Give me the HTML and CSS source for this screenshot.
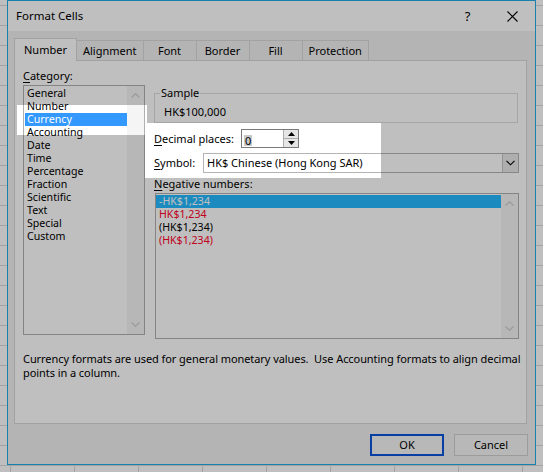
FILE: index.html
```html
<!DOCTYPE html>
<html>
<head>
<meta charset="utf-8">
<title>Format Cells</title>
<link rel="stylesheet" href="styles.css">
</head>
<body>
<div class="sheet">
  <div class="dialog">
    <div class="titlebar">
      <span class="title">Format Cells</span>
      <span class="tb-btn help">?</span>
      <span class="tb-btn close"><svg width="11" height="11" viewBox="0 0 11 11"><path d="M0.5 0.5 L10.5 10.5 M10.5 0.5 L0.5 10.5" stroke="#000" stroke-width="1.1" fill="none"/></svg></span>
    </div>
    <div class="body">
      <div class="tabs">
        <div class="tab active">Number</div>
        <div class="tab">Alignment</div>
        <div class="tab">Font</div>
        <div class="tab">Border</div>
        <div class="tab">Fill</div>
        <div class="tab">Protection</div>
      </div>
      <div class="panel">
        <div class="cols">
          <div class="left">
            <div class="label"><u>C</u>ategory:</div>
            <div class="listbox cat">
              <div class="items">
                <div class="item">General</div>
                <div class="item">Number</div>
                <div class="item sel">Currency</div>
                <div class="item">Accounting</div>
                <div class="item">Date</div>
                <div class="item">Time</div>
                <div class="item">Percentage</div>
                <div class="item">Fraction</div>
                <div class="item">Scientific</div>
                <div class="item">Text</div>
                <div class="item">Special</div>
                <div class="item">Custom</div>
              </div>
              <div class="scroll">
                <svg width="9" height="5" viewBox="0 0 9 5"><path d="M0.5 4.5 L4.5 0.8 L8.5 4.5" stroke="#d2d2d2" stroke-width="1.5" fill="none"/></svg>
                <svg width="9" height="5" viewBox="0 0 9 5"><path d="M0.5 0.5 L4.5 4.2 L8.5 0.5" stroke="#d2d2d2" stroke-width="1.5" fill="none"/></svg>
              </div>
            </div>
          </div>
          <div class="right">
            <fieldset class="sample">
              <legend>Sample</legend>
              <div class="sample-val">HK$100,000</div>
            </fieldset>
            <div class="row dec">
              <span class="row-label dec-label"><u>D</u>ecimal places:</span>
              <div class="spin">
                <div class="spin-val"><span class="spin-sel">0</span></div>
                <div class="spin-btns">
                  <div class="spin-btn"><svg width="7" height="4" viewBox="0 0 7 4"><path d="M0 4 L3.5 0 L7 4Z" fill="#000"/></svg></div>
                  <div class="spin-btn lower"><svg width="7" height="4" viewBox="0 0 7 4"><path d="M0 0 L3.5 4 L7 0Z" fill="#000"/></svg></div>
                </div>
              </div>
            </div>
            <div class="row sym">
              <span class="row-label sym-label"><u>S</u>ymbol:</span>
              <div class="combo">
                <span class="combo-val">HK$ Chinese (Hong Kong SAR)</span>
                <span class="combo-btn"><svg width="9" height="6" viewBox="0 0 9 6"><path d="M0.5 0.8 L4.5 4.8 L8.5 0.8" stroke="#000" stroke-width="1.1" fill="none"/></svg></span>
              </div>
            </div>
            <div class="label neg-label"><u>N</u>egative numbers:</div>
            <div class="listbox neg">
              <div class="items">
                <div class="item sel">-HK$1,234</div>
                <div class="item red">HK$1,234</div>
                <div class="item">(HK$1,234)</div>
                <div class="item red">(HK$1,234)</div>
              </div>
              <div class="scroll">
                <svg width="9" height="5" viewBox="0 0 9 5"><path d="M0.5 4.5 L4.5 0.8 L8.5 4.5" stroke="#d2d2d2" stroke-width="1.5" fill="none"/></svg>
                <svg width="9" height="5" viewBox="0 0 9 5"><path d="M0.5 0.5 L4.5 4.2 L8.5 0.5" stroke="#d2d2d2" stroke-width="1.5" fill="none"/></svg>
              </div>
            </div>
          </div>
        </div>
        <p class="desc">Currency formats are used for general monetary values.&nbsp; Use Accounting formats to align decimal<br>points in a column.</p>
      </div>
      <div class="buttons">
        <button class="btn ok">OK</button>
        <button class="btn">Cancel</button>
      </div>
    </div>
  </div>
  <svg class="dim" width="543" height="472" viewBox="0 0 543 472"><path fill-rule="evenodd" fill="rgba(0,0,0,0.25)" d="M0 0H543V472H0Z M17 105H147V123H381V178H145V135H17Z"/></svg>
</div>
</body>
</html>
```

FILE: styles.css
```css
* { box-sizing: border-box; }
html, body { margin: 0; padding: 0; }
body {
  width: 543px;
  height: 472px;
  overflow: hidden;
  font-family: "Noto Sans", "Open Sans", sans-serif;
  font-size: 11px;
  color: #000;
  background-color: #fff;
  background-image:
    linear-gradient(#dadada 1px, transparent 1px),
    linear-gradient(90deg, #dadada 1px, transparent 1px);
  background-size: 64px 20px;
  background-position: 10px 5px;
}
.sheet { position: relative; width: 543px; height: 472px; }
.dialog {
  margin-left: 7px;
  width: 529px;
  height: 465px;
  border: 1px solid #20ade9;
  background: #f0f0f0;
  display: flex;
  flex-direction: column;
}
.titlebar {
  height: 30px;
  background: #fff;
  display: flex;
  align-items: center;
  padding-left: 8px;
}
.title { font-size: 11.5px; line-height: 16px; }
.help { margin-left: auto; }
.tb-btn {
  width: 45px;
  height: 30px;
  display: flex;
  align-items: center;
  justify-content: center;
  font-size: 13px;
}
.body { flex: 1; display: flex; flex-direction: column; }
.tabs {
  display: flex;
  align-items: flex-end;
  height: 22px;
  margin: 7px 0 0 6px;
  position: relative;
  z-index: 1;
}
.tab {
  height: 20px;
  min-width: 54px;
  padding: 0 6px;
  border: 1px solid #d9d9d9;
  border-bottom: none;
  margin-left: -1px;
  background: #f0f0f0;
  text-align: center;
  line-height: 19px;
}
.tab.active {
  height: 23px;
  margin-left: 0;
  margin-bottom: -1px;
  background: #fff;
  line-height: 21px;
  padding: 0 9px;
}
.panel {
  margin: 0 8px 0 6px;
  height: 364px;
  border: 1px solid #d9d9d9;
  background: #fff;
  padding: 8px 7px 0 8px;
}
.cols { display: flex; gap: 9px; }
.left { width: 122px; }
.right { flex: 1; display: flex; flex-direction: column; }
.label { line-height: 14px; height: 14px; }
u { text-decoration-thickness: 1px; text-underline-offset: 2px; }
.left .label { margin-bottom: 2px; }
.listbox {
  display: flex;
  border: 1px solid #b0b0b0;
  background: #fff;
}
.listbox.cat { height: 250px; }
.listbox.neg { height: 146px; margin: 2px 0 0 1px; }
.items { flex: 1; padding-top: 1px; }
.item { height: 13px; line-height: 13px; white-space: nowrap; font-size: 10.6px; }
.cat .item { margin-left: 1px; padding-left: 2px; }
.neg .item { padding-left: 3px; }
.cat .item.sel { background: #3399ff; color: #fff; }
.neg .item.sel { background: #23b9ff; color: #fff; }
.item.red { color: #ff0028; }
.scroll {
  width: 17px;
  background: #f5f5f5;
  display: flex;
  flex-direction: column;
  align-items: center;
  justify-content: space-between;
  padding: 7px 0 7px;
}
.scroll svg { display: block; }
.sample {
  margin: 17px 1px 0 0;
  padding: 0 0 3px 5px;
  border: 1px solid #dcdcdc;
  min-width: 0;
}
.sample legend { padding: 0 1px; line-height: 14px; }
.sample-val { margin: 5px 0 0 4px; line-height: 14px; }
.row { display: flex; align-items: center; }
.row-label { line-height: 14px; }
.dec { margin-top: 6px; height: 19px; }
.dec-label { width: 87px; }
.spin {
  width: 58px;
  height: 19px;
  border: 1px solid #7a7a7a;
  display: flex;
  background: #fff;
}
.spin-val { flex: 1; padding: 3px 0 0 2px; }
.spin-sel {
  display: inline-block;
  background: #c8c8c8;
  line-height: 11px;
  height: 11px;
  padding: 0 1px;
}
.spin-btns {
  width: 15px;
  border-left: 1px solid #adadad;
  display: flex;
  flex-direction: column;
}
.spin-btn {
  flex: 1;
  background: #e5e5e5;
  display: flex;
  align-items: center;
  justify-content: center;
}
.spin-btn.lower { border-top: 1px solid #adadad; }
.spin-btn svg { display: block; }
.sym { margin-top: 5px; height: 20px; }
.sym-label { width: 49px; }
.combo {
  flex: 1;
  height: 20px;
  border: 1px solid #b4b4b4;
  display: flex;
  background: #fff;
}
.combo-val { flex: 1; padding-left: 3px; line-height: 18px; }
.combo-btn {
  width: 16px;
  background: #e8e8e8;
  border-left: 1px solid #c4c4c4;
  display: flex;
  align-items: center;
  justify-content: center;
}
.combo-btn svg { display: block; }
.neg-label { margin-top: 4px; }
.desc {
  margin: 13px 0 0 0;
  line-height: 14px;
  white-space: nowrap;
  letter-spacing: -0.07px;
}
.buttons {
  display: flex;
  justify-content: flex-end;
  gap: 10px;
  margin: 10px 7px 0 0;
}
.btn {
  width: 74px;
  height: 22px;
  border: 1px solid #d0d0d0;
  background: #f6f6f6;
  font-family: "Noto Sans", "Open Sans", sans-serif;
  font-size: 11px;
  color: #000;
  padding: 0;
  line-height: 18px;
}
.btn.ok { border: 2px solid #0a55dd; }
.dim { position: absolute; left: 0; top: 0; pointer-events: none; z-index: 10; }
```
